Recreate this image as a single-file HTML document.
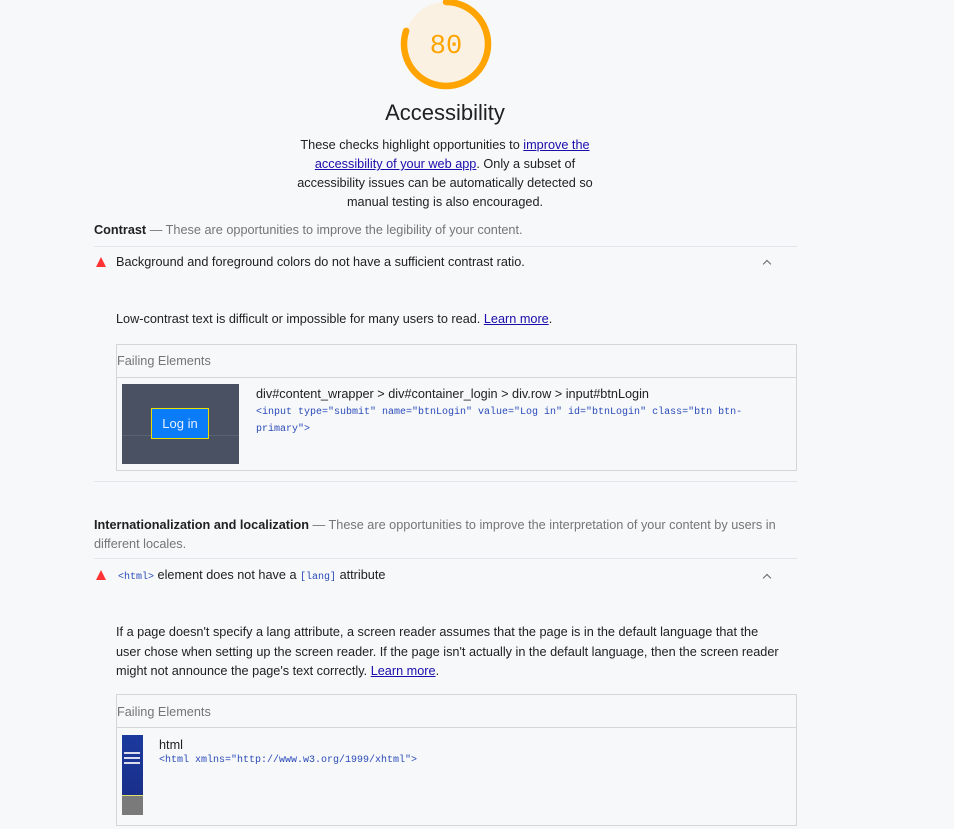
<!DOCTYPE html>
<html><head><meta charset="utf-8"><style>
body{margin:0;width:954px;height:829px;background:#f7f8fa;font-family:"Liberation Sans",Arial,sans-serif;color:#212121;position:relative;overflow:hidden;font-size:12.7px}
.a{position:absolute;white-space:nowrap}
.mono{font-family:"Liberation Mono",monospace;font-size:10px;color:#2a4bb8}
a{color:#1a0dab;text-decoration:underline}
.hr{position:absolute;height:1px;background:#e4e6ea}
.grey{color:#757575}
.box{position:absolute;border:1px solid #d6d6d6}
.tri{position:absolute;width:0;height:0;border-left:5px solid transparent;border-right:5px solid transparent;border-bottom:10px solid #f33}
.chev{position:absolute;width:5px;height:5px;border-left:1.5px solid #666;border-top:1.5px solid #666;transform:rotate(45deg)}
</style></head><body>
<svg class="a" style="left:398px;top:-4px" width="96" height="96" viewBox="0 0 96 96">
<circle cx="48" cy="48" r="42" fill="#faf1e2"/>
<circle cx="48" cy="48" r="42" fill="none" stroke="#ffa400" stroke-width="6.5" stroke-dasharray="211 264" transform="rotate(-90 48 48)" stroke-linecap="round"/>
<text x="48" y="57" text-anchor="middle" font-family="Liberation Mono,monospace" font-size="27" fill="#ffa400">80</text>
</svg>
<div class="a" style="left:0;width:890px;text-align:center;top:100px;font-size:22px;color:#212121">Accessibility</div>
<div class="a" style="left:285px;width:320px;top:136px;text-align:center;white-space:normal;line-height:19px">These checks highlight opportunities to <a>improve the accessibility of your web app</a>. Only a subset of accessibility issues can be automatically detected so manual testing is also encouraged.</div>

<div class="a" style="left:94px;top:223px"><b>Contrast</b> <span class="grey">— These are opportunities to improve the legibility of your content.</span></div>
<div class="hr" style="left:94px;top:246px;width:703px"></div>
<div class="tri" style="left:96px;top:257px"></div>
<div class="a" style="left:116px;top:255px">Background and foreground colors do not have a sufficient contrast ratio.</div>
<div class="chev" style="left:764px;top:261px"></div>
<div class="a" style="left:116px;top:312px">Low-contrast text is difficult or impossible for many users to read. <a>Learn more</a>.</div>
<div class="box" style="left:116px;top:344px;width:679px;height:125px"></div>
<div class="hr" style="left:117px;top:377px;width:679px;background:#d6d6d6"></div>
<div class="a grey" style="left:117px;top:354px">Failing Elements</div>
<div class="a" style="left:122px;top:384px;width:117px;height:80px;background:#4a5163"></div>
<div class="a" style="left:122px;top:435px;width:117px;height:1px;background:#5a6173"></div>
<div class="a" style="left:151px;top:408px;width:56px;height:29px;background:#0a7cf7;border:1px solid #e5e000;color:#e8f0ff;text-align:center;line-height:29px;font-size:13px">Log in</div>
<div class="a" style="left:256px;top:387px">div#content_wrapper &gt; div#container_login &gt; div.row &gt; input#btnLogin</div>
<div class="a mono" style="left:256px;top:404px;line-height:17px">&lt;input type="submit" name="btnLogin" value="Log in" id="btnLogin" class="btn btn-<br>primary"&gt;</div>
<div class="hr" style="left:94px;top:481px;width:703px"></div>

<div class="a" style="left:94px;top:516px;white-space:normal;width:700px;line-height:19px"><b>Internationalization and localization</b> <span class="grey">— These are opportunities to improve the interpretation of your content by users in different locales.</span></div>
<div class="hr" style="left:94px;top:558px;width:703px"></div>
<div class="tri" style="left:96px;top:570px"></div>
<div class="a" style="left:118px;top:568px"><span class="mono">&lt;html&gt;</span> element does not have a <span class="mono">[lang]</span> attribute</div>
<div class="chev" style="left:764px;top:575px"></div>
<div class="a" style="left:116px;top:623px;line-height:19.5px">If a page doesn't specify a lang attribute, a screen reader assumes that the page is in the default language that the<br>user chose when setting up the screen reader. If the page isn't actually in the default language, then the screen reader<br>might not announce the page's text correctly. <a>Learn more</a>.</div>
<div class="box" style="left:116px;top:694px;width:679px;height:130px"></div>
<div class="hr" style="left:117px;top:727px;width:679px;background:#d6d6d6"></div>
<div class="a grey" style="left:117px;top:705px">Failing Elements</div>
<div class="a" style="left:122px;top:735px;width:21px;height:60px;background:linear-gradient(#1b3a9e,#1a2f8a)"></div>
<div class="a" style="left:124px;top:752px;width:16px;height:2px;background:#dde"></div>
<div class="a" style="left:124px;top:757px;width:16px;height:2px;background:#dde"></div>
<div class="a" style="left:124px;top:762px;width:16px;height:2px;background:#dde"></div>
<div class="a" style="left:122px;top:795px;width:21px;height:1px;background:#dde36a"></div>
<div class="a" style="left:122px;top:796px;width:21px;height:19px;background:#7a7a7a"></div>
<div class="a" style="left:159px;top:738px">html</div>
<div class="a mono" style="left:159px;top:755px">&lt;html xmlns="http://www.w3.org/1999/xhtml"&gt;</div>
</body></html>
